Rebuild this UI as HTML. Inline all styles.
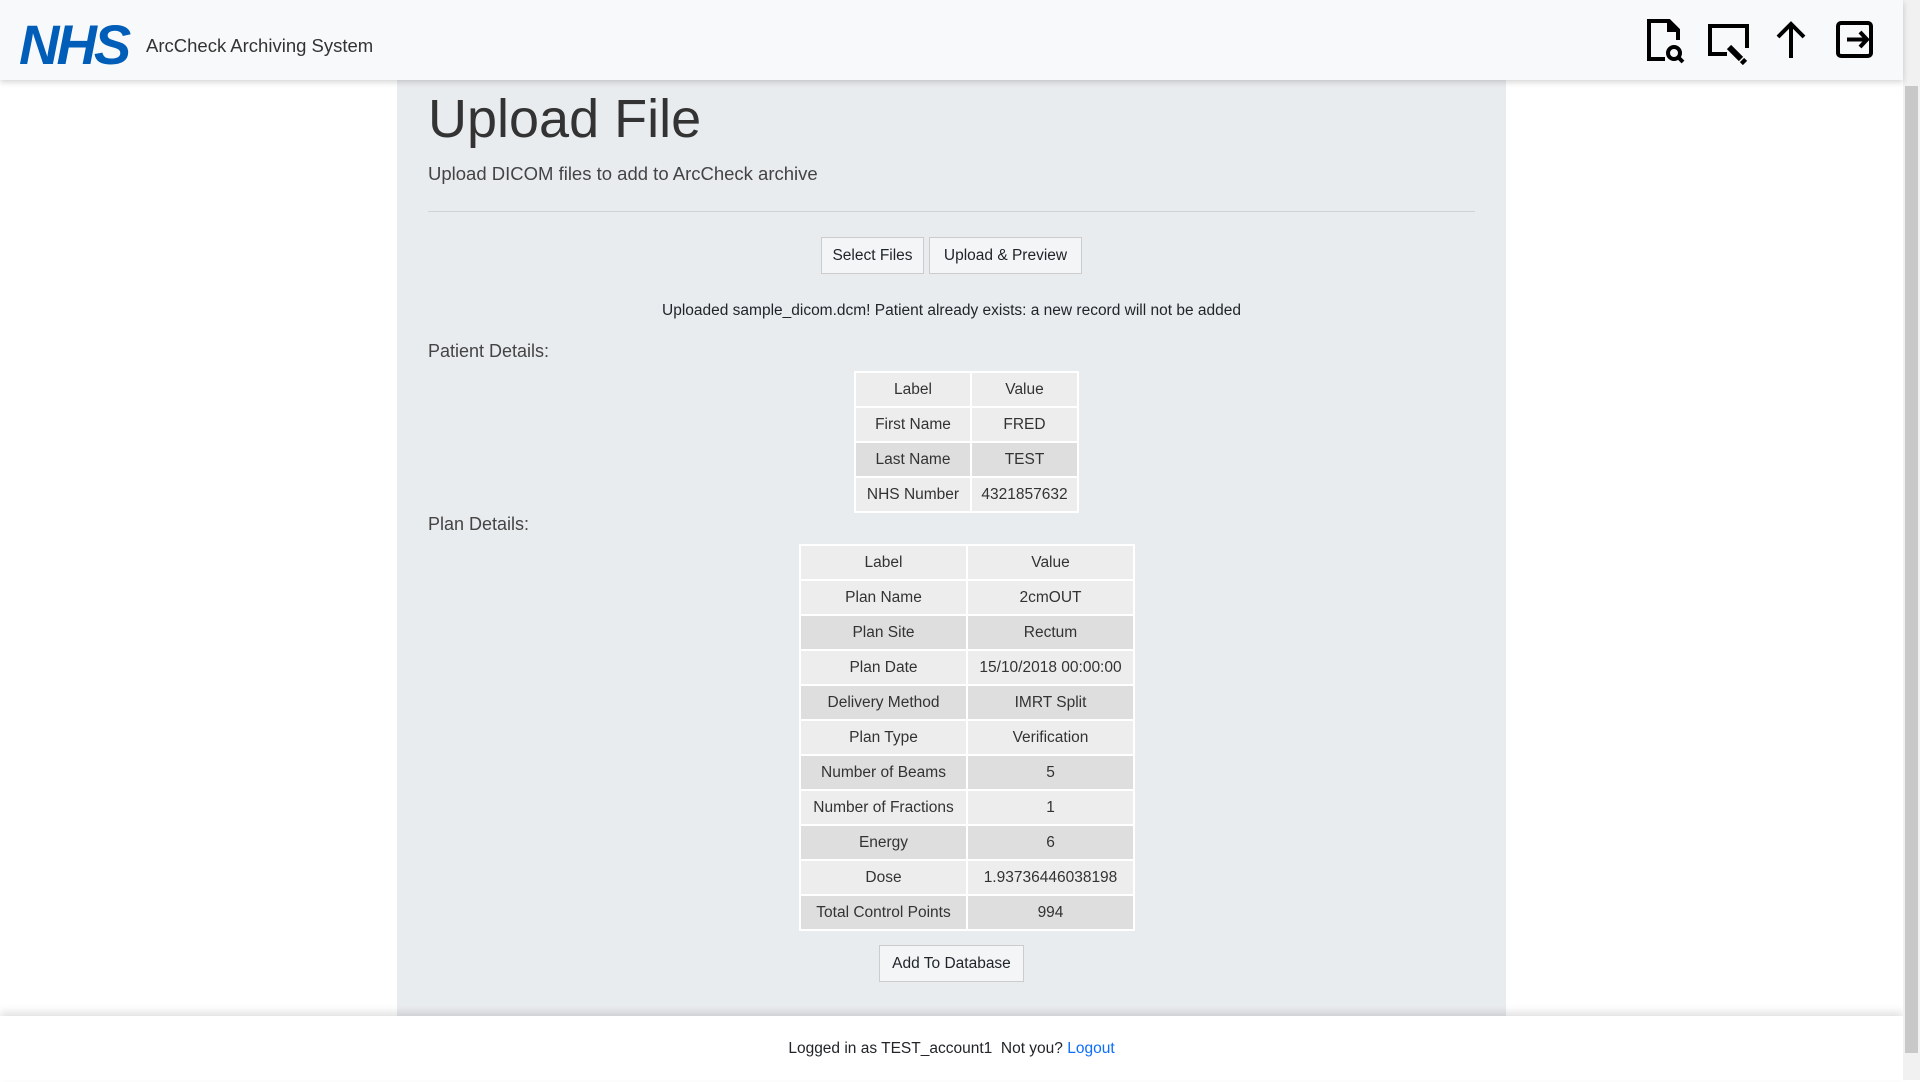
<!DOCTYPE html>
<html><head><meta charset="utf-8"><style>
*{box-sizing:border-box;margin:0;padding:0}
body{width:1920px;height:1080px;overflow:hidden;background:#fff;font-family:"Segoe UI","Liberation Sans",sans-serif;color:#212529;position:relative}
.hdr{position:absolute;left:0;top:0;width:1903px;height:80px;background:#f8f9fa;box-shadow:0 2px 6px rgba(0,0,0,.18);z-index:2}
.logo{position:absolute;left:19px;top:12px;font:italic bold 56px "Liberation Sans",sans-serif;color:#005eb8;letter-spacing:-3px}
.brand{position:absolute;left:146px;top:35px;font-size:18.5px;color:#333}
.panel{position:absolute;left:397px;top:80px;width:1109px;height:936px;background:#e9ecef}
.t{position:absolute;left:428px;top:88px;font-size:54px;font-weight:300;color:#333}
.lead{position:absolute;left:428px;top:163px;font-size:18.5px;font-weight:300;color:#444}
.hr{position:absolute;left:428px;top:211px;width:1047px;height:1px;background:#cfd3d7}
.btn{position:absolute;height:37px;border:1px solid #ccc;background:#f4f5f7;font-size:15.5px;text-align:center;line-height:35px;color:#212529}
.msg{position:absolute;left:397px;width:1109px;top:302px;text-align:center;font-size:15.5px}
.sec{position:absolute;left:428px;font-size:18px;font-weight:300;color:#444}
table{position:absolute;border-collapse:collapse;font-size:15.5px;color:#333}
td{border:2px solid #fff;height:35px;text-align:center;background:#ededed;padding:0 8px}
tr.d td{background:#dedede}
.ftr{position:absolute;left:0;top:1016px;width:1903px;height:64px;background:#fff;box-shadow:0 -4px 8px rgba(0,0,0,.12);text-align:center;line-height:66px;font-size:15.5px}
.ftr a{color:#0d6efd;text-decoration:none}
.sb{position:absolute;right:0;top:0;width:17px;height:1080px;background:#f1f1f1}
.th{position:absolute;left:2px;top:86px;width:13px;height:967px;background:#c8c8c8}
</style></head><body>
<div class="hdr">
<div class="logo">NHS</div>
<div class="brand">ArcCheck Archiving System</div>
<svg style="position:absolute;left:1645px;top:18px" width="48" height="48" viewBox="0 0 48 48" fill="none" stroke="#000" stroke-width="4">
<path d="M20 41H4V3h20l9 9v10"/><path d="M24 3v9h9" fill="#000"/><circle cx="29" cy="35" r="6"/><path d="M33 39l5 5"/></svg>
<svg style="position:absolute;left:1705px;top:22px" width="48" height="44" viewBox="0 0 48 44" fill="none" stroke="#000" stroke-width="4">
<path d="M22 32H5V4h37v22"/><path d="M24 25l12 12" stroke-width="6"/><path d="M37 38l3 3" stroke-width="6"/></svg>
<svg style="position:absolute;left:1773px;top:20px" width="36" height="40" viewBox="0 0 36 40" fill="none" stroke="#000" stroke-width="4">
<path d="M18 38V4M5 17L18 4l13 13"/></svg>
<svg style="position:absolute;left:1835px;top:20px" width="42" height="40" viewBox="0 0 42 40" fill="none" stroke="#000" stroke-width="4">
<rect x="3" y="3" width="33" height="33" rx="3"/><path d="M12 19.5h20M25 12l7 7.5-7 7.5"/></svg>
</div>
<div class="panel"></div>
<div class="t">Upload File</div>
<div class="lead">Upload DICOM files to add to ArcCheck archive</div>
<div class="hr"></div>
<div class="btn" style="left:821px;top:237px;width:103px">Select Files</div>
<div class="btn" style="left:929px;top:237px;width:153px">Upload &amp; Preview</div>
<div class="msg">Uploaded sample_dicom.dcm! Patient already exists: a new record will not be added</div>
<div class="sec" style="top:341px">Patient Details:</div>
<table style="left:854px;top:371px">
<tr><td style="width:116px">Label</td><td style="width:107px">Value</td></tr>
<tr><td>First Name</td><td>FRED</td></tr>
<tr class="d"><td>Last Name</td><td>TEST</td></tr>
<tr><td>NHS Number</td><td>4321857632</td></tr>
</table>
<div class="sec" style="top:514px">Plan Details:</div>
<table style="left:799px;top:544px">
<tr><td style="width:167px">Label</td><td style="width:167px">Value</td></tr>
<tr><td>Plan Name</td><td>2cmOUT</td></tr>
<tr class="d"><td>Plan Site</td><td>Rectum</td></tr>
<tr><td>Plan Date</td><td>15/10/2018 00:00:00</td></tr>
<tr class="d"><td>Delivery Method</td><td>IMRT Split</td></tr>
<tr><td>Plan Type</td><td>Verification</td></tr>
<tr class="d"><td>Number of Beams</td><td>5</td></tr>
<tr><td>Number of Fractions</td><td>1</td></tr>
<tr class="d"><td>Energy</td><td>6</td></tr>
<tr><td>Dose</td><td>1.93736446038198</td></tr>
<tr class="d"><td>Total Control Points</td><td>994</td></tr>
</table>
<div class="btn" style="left:879px;top:945px;width:145px;height:37px">Add To Database</div>
<div class="ftr">Logged in as TEST_account1&nbsp; Not you? <a>Logout</a></div>
<div class="sb"><div class="th"></div></div>
</body></html>
